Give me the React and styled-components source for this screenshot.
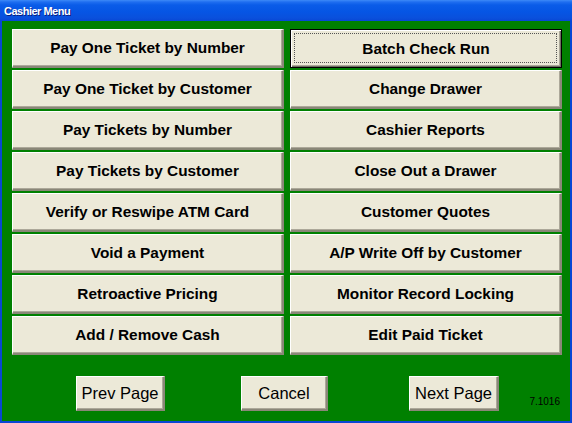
import React from "react";
import styled, { createGlobalStyle } from "styled-components";

const Global = createGlobalStyle`
  html, body { margin: 0; padding: 0; background: #0a4fd8; }
  #root { width: 572px; height: 423px; }
`;

const Window = styled.div`
  width: 572px;
  height: 423px;
  display: flex;
  flex-direction: column;
  background: #0846d4;
  box-sizing: border-box;
`;

const TitleBar = styled.div`
  height: 21px;
  flex: none;
  display: flex;
  align-items: center;
  padding-left: 4px;
  box-sizing: border-box;
  background: linear-gradient(
    to bottom,
    #3d8af7 0px,
    #1f6ef0 2px,
    #0a5ce8 5px,
    #0655e4 12px,
    #0a50dc 18px,
    #0846d4 21px
  );
`;

const Title = styled.span`
  font-family: "Liberation Sans", Arial, sans-serif;
  font-weight: bold;
  font-size: 11px;
  letter-spacing: -0.5px;
  color: #ffffff;
  text-shadow: 1px 1px 0 #0a1e80;
`;

const Client = styled.div`
  flex: 1;
  margin: 0 2px 2px 2px;
  background: #008000;
  display: flex;
  flex-direction: column;
  padding: 8px 9px 0 10px;
  box-sizing: border-box;
`;

const Grid = styled.div`
  display: grid;
  grid-template-columns: 272px 272px;
  grid-auto-rows: 39px;
  column-gap: 6px;
  row-gap: 2px;
`;

const MenuButton = styled.button`
  margin: 0;
  padding: 0;
  background: #ece9d8;
  font-family: "Liberation Sans", Arial, sans-serif;
  font-weight: bold;
  font-size: 15.4px;
  color: #000;
  box-sizing: border-box;
  border-style: solid;
  border-width: 1px 2px 2px 1px;
  border-color: #ffffff #8a8778 #8a8778 #ffffff;
  box-shadow: inset -1px -1px 0 #aca899;
  outline: none;
  position: relative;
  cursor: default;
  ${(p) =>
    p.$focused &&
    `
    border: 1px solid #000;
    box-shadow: inset 1px 1px 0 #ffffff, inset -1px -1px 0 #716f64, inset -2px -2px 0 #aca899;
    &::after {
      content: "";
      position: absolute;
      inset: 3px 4px 4px 3px;
      border: 1px dotted #555;
    }
  `}
`;

const Footer = styled.div`
  display: grid;
  grid-template-columns: 64px 89px 76px 87px 81px 90px 1fr;
  align-items: end;
  margin-top: 21px;
  height: 35px;
`;

const Spacer = styled.div``;

const PageButton = styled.button`
  margin: 0;
  padding: 0;
  height: 35px;
  background: #ece9d8;
  font-family: "Liberation Sans", Arial, sans-serif;
  font-size: 16.5px;
  color: #000;
  box-sizing: border-box;
  border-style: solid;
  border-width: 1px 2px 2px 1px;
  border-color: #ffffff #8a8778 #8a8778 #ffffff;
  box-shadow: inset -1px -1px 0 #aca899;
  outline: none;
  cursor: default;
`;

const Version = styled.span`
  justify-self: end;
  align-self: end;
  margin-bottom: 4px;
  margin-right: 1px;
  font-family: "Liberation Sans", Arial, sans-serif;
  font-size: 10px;
  color: #000;
`;

const left = [
  "Pay One Ticket by Number",
  "Pay One Ticket by Customer",
  "Pay Tickets by Number",
  "Pay Tickets by Customer",
  "Verify or Reswipe ATM Card",
  "Void a Payment",
  "Retroactive Pricing",
  "Add / Remove Cash",
];

const right = [
  "Batch Check Run",
  "Change Drawer",
  "Cashier Reports",
  "Close Out a Drawer",
  "Customer Quotes",
  "A/P Write Off by Customer",
  "Monitor Record Locking",
  "Edit Paid Ticket",
];

export default function App() {
  const items = [];
  for (let i = 0; i < left.length; i++) {
    items.push(<MenuButton key={"l" + i}>{left[i]}</MenuButton>);
    items.push(
      <MenuButton key={"r" + i} $focused={i === 0}>
        {right[i]}
      </MenuButton>
    );
  }
  return (
    <>
      <Global />
      <Window>
        <TitleBar>
          <Title>Cashier Menu</Title>
        </TitleBar>
        <Client>
          <Grid>{items}</Grid>
          <Footer>
            <Spacer />
            <PageButton>Prev Page</PageButton>
            <Spacer />
            <PageButton>Cancel</PageButton>
            <Spacer />
            <PageButton>Next Page</PageButton>
            <Version>7.1016</Version>
          </Footer>
        </Client>
      </Window>
    </>
  );
}
